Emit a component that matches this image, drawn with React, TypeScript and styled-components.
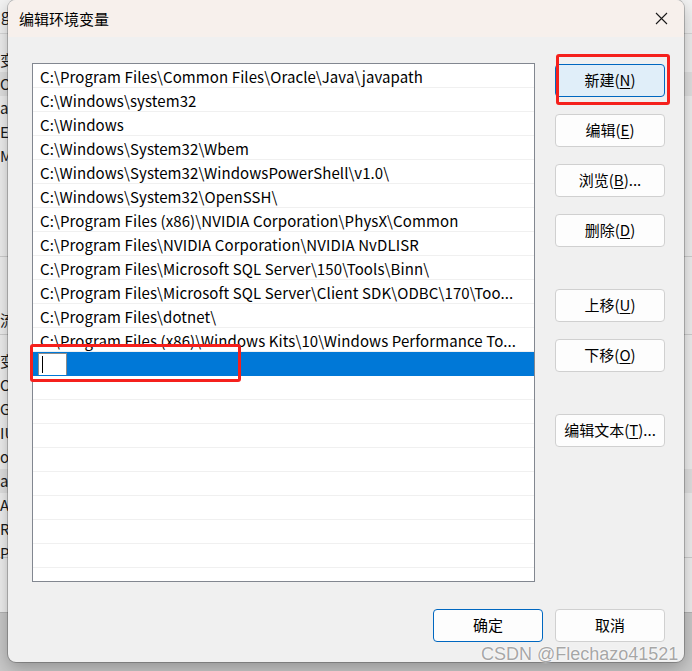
import React from 'react';
import styled, { createGlobalStyle } from 'styled-components';

const GlobalStyle = createGlobalStyle`
  html, body {
    margin: 0;
    padding: 0;
    width: 692px;
    height: 671px;
    overflow: hidden;
    font-family: "Noto Sans CJK SC", "Noto Sans", sans-serif;
  }
`;

const Desktop = styled.div`
  position: relative;
  width: 692px;
  height: 671px;
  background: #c9c9c9;
  overflow: hidden;
`;

// ventana de atras (solo se ven los bordes)
const BackWindow = styled.div`
  position: absolute;
  left: -40px;
  top: -8px;
  width: 740px;
  height: 620px;
  background: #f0f0f0;
  border-bottom: 1px solid #b5b5b5;
  display: flex;
  flex-direction: column;
  font-size: 15px;
  color: #1a1a1a;
`;

const BackHeader = styled.div`
  height: 42px;
  box-sizing: border-box;
  display: flex;
  align-items: flex-end;
  padding: 0 0 8px 41px;
  border-bottom: 1px solid #d9d9d9;
  background: #f3f3f3;
`;

const BackList = styled.div`
  display: flex;
  flex-direction: column;
  padding-top: 14px;
  height: 208px;
  border-bottom: 1px solid #cfcfcf;
`;

const BackRow = styled.div<{ $hi?: boolean }>`
  height: 24px;
  line-height: 24px;
  padding-left: 40px;
  white-space: nowrap;
  background: ${p => (p.$hi ? '#e2e2e2' : 'transparent')};
`;

const BackSection = styled.div`
  height: 78px;
  display: flex;
  align-items: flex-end;
  padding-left: 40px;
  padding-bottom: 4px;
  box-sizing: border-box;
  border-bottom: 1px solid #cfcfcf;
`;

const Dialog = styled.div`
  position: absolute;
  left: 8px;
  top: 0;
  width: 676px;
  height: 662px;
  background: #f0f0f0;
  border-radius: 8px;
  box-shadow: 0 0 0 1px rgba(0, 0, 0, 0.22), 0 6px 18px rgba(0, 0, 0, 0.28);
  display: flex;
  flex-direction: column;
  overflow: hidden;
`;

const TitleBar = styled.div`
  height: 37px;
  flex-shrink: 0;
  display: flex;
  align-items: center;
  justify-content: space-between;
  padding-left: 11px;
  padding-right: 16px;
  background: #f7f0ec;
`;

const Title = styled.span`
  font-size: 15px;
  color: #000;
`;

const CloseBtn = styled.div`
  width: 14px;
  height: 14px;
  display: flex;
  align-items: center;
  justify-content: center;
`;

const Body = styled.div`
  flex: 1;
  display: flex;
  flex-direction: column;
  padding: 26px 19px 20px 24px;
`;

const Main = styled.div`
  display: flex;
  gap: 20px;
`;

const ListBox = styled.div`
  width: 503px;
  height: 519px;
  box-sizing: border-box;
  border: 1px solid #828790;
  background: #fff;
  overflow: hidden;
  display: flex;
  flex-direction: column;
`;

const Row = styled.div<{ $selected?: boolean }>`
  height: 24px;
  flex-shrink: 0;
  box-sizing: border-box;
  border-bottom: 1px solid ${p => (p.$selected ? '#0078d7' : '#f0f0f0')};
  background: ${p => (p.$selected ? '#0078d7' : '#fff')};
  padding: ${p => (p.$selected ? '0 0 0 5px' : '1px 0 0 7px')};
  display: flex;
  align-items: center;
  font-size: 15px;
  letter-spacing: 0.1px;
  color: #000;
  white-space: nowrap;
  overflow: hidden;
`;

const EditBox = styled.div`
  width: 29px;
  height: 23px;
  box-sizing: border-box;
  border: 1px solid #8c8c8c;
  background: #fff;
  display: flex;
  align-items: center;
  padding-left: 3px;
  align-self: flex-start;
  margin-top: 1px;
`;

const Caret = styled.span`
  width: 1px;
  height: 17px;
  background: #000;
`;

const ButtonColumn = styled.div`
  width: 110px;
  display: flex;
  flex-direction: column;
  gap: 17px;
  padding-top: 1px;
`;

const Button = styled.button<{ $primary?: boolean; $pressed?: boolean; $spaced?: boolean }>`
  width: 110px;
  height: 33px;
  box-sizing: border-box;
  margin: ${p => (p.$spaced ? '25px 0 0 0' : '0')};
  padding: 0 0 2px 0;
  border-radius: 4px;
  border: 1px solid ${p => (p.$primary || p.$pressed ? '#0067c0' : '#d0d0d0')};
  background: ${p => (p.$pressed ? '#e0eef9' : '#fdfdfd')};
  font-family: "Noto Sans CJK SC", "Noto Sans", sans-serif;
  font-size: 15px;
  color: #000;
  display: flex;
  align-items: center;
  justify-content: center;
`;

const Key = styled.span`
  text-decoration: underline;
  text-underline-offset: 2px;
`;

const Footer = styled.div`
  display: flex;
  justify-content: flex-end;
  gap: 12px;
  margin-top: 27px;
`;

const Mark = styled.div<{ $left: number; $top: number; $w: number; $h: number }>`
  position: absolute;
  left: ${p => p.$left}px;
  top: ${p => p.$top}px;
  width: ${p => p.$w}px;
  height: ${p => p.$h}px;
  box-sizing: border-box;
  border: 3px solid #f5201c;
  border-radius: 3px;
  pointer-events: none;
`;

const Watermark = styled.div`
  position: absolute;
  left: 481px;
  top: 643px;
  font-family: "Liberation Sans", Arial, sans-serif;
  font-size: 18px;
  line-height: 22px;
  color: rgba(150, 150, 150, 0.85);
  text-shadow: 0 0 2px #fff, 0 0 1px #fff;
  white-space: nowrap;
`;

const paths = [
  String.raw`C:\Program Files\Common Files\Oracle\Java\javapath`,
  String.raw`C:\Windows\system32`,
  String.raw`C:\Windows`,
  String.raw`C:\Windows\System32\Wbem`,
  String.raw`C:\Windows\System32\WindowsPowerShell\v1.0\ `.trim(),
  String.raw`C:\Windows\System32\OpenSSH\ `.trim(),
  String.raw`C:\Program Files (x86)\NVIDIA Corporation\PhysX\Common`,
  String.raw`C:\Program Files\NVIDIA Corporation\NVIDIA NvDLISR`,
  String.raw`C:\Program Files\Microsoft SQL Server\150\Tools\Binn\ `.trim(),
  String.raw`C:\Program Files\Microsoft SQL Server\Client SDK\ODBC\170\Too...`,
  String.raw`C:\Program Files\dotnet\ `.trim(),
  String.raw`C:\Program Files (x86)\Windows Kits\10\Windows Performance To...`,
];

const label = (text: string, key: string, tail = '') => (
  <>
    {text}(<Key>{key}</Key>){tail}
  </>
);

export default function App() {
  const empty = Array.from({ length: 10 });
  return (
    <Desktop>
      <GlobalStyle />
      <BackWindow>
        <BackHeader>g</BackHeader>
        <BackList>
          <BackRow>变量</BackRow>
          <BackRow $hi>Or</BackRow>
          <BackRow>a</BackRow>
          <BackRow>E</BackRow>
          <BackRow>M</BackRow>
        </BackList>
        <BackSection>流</BackSection>
        <BackList>
          <BackRow>变量</BackRow>
          <BackRow>Or</BackRow>
          <BackRow>G</BackRow>
          <BackRow>IU</BackRow>
          <BackRow>oS</BackRow>
          <BackRow $hi>a</BackRow>
          <BackRow>A</BackRow>
          <BackRow>R</BackRow>
          <BackRow>P</BackRow>
        </BackList>
      </BackWindow>

      <Dialog>
        <TitleBar>
          <Title>编辑环境变量</Title>
          <CloseBtn>
            <svg width="13" height="13" viewBox="0 0 13 13">
              <path d="M1 1 L12 12 M12 1 L1 12" stroke="#1a1a1a" strokeWidth="1.1" fill="none" />
            </svg>
          </CloseBtn>
        </TitleBar>
        <Body>
          <Main>
            <ListBox>
              {paths.map(p => (
                <Row key={p}>{p}</Row>
              ))}
              <Row $selected>
                <EditBox>
                  <Caret />
                </EditBox>
              </Row>
              {empty.map((_, i) => (
                <Row key={i} />
              ))}
            </ListBox>
            <ButtonColumn>
              <Button $pressed>{label('新建', 'N')}</Button>
              <Button>{label('编辑', 'E')}</Button>
              <Button>{label('浏览', 'B', '...')}</Button>
              <Button>{label('删除', 'D')}</Button>
              <Button $spaced>{label('上移', 'U')}</Button>
              <Button>{label('下移', 'O')}</Button>
              <Button $spaced>{label('编辑文本', 'T', '...')}</Button>
            </ButtonColumn>
          </Main>
          <Footer>
            <Button $primary>确定</Button>
            <Button>取消</Button>
          </Footer>
        </Body>
      </Dialog>

      <Mark $left={30} $top={344} $w={211} $h={38} />
      <Mark $left={556} $top={54} $w={114} $h={51} />
      <Watermark>CSDN @Flechazo41521</Watermark>
    </Desktop>
  );
}
